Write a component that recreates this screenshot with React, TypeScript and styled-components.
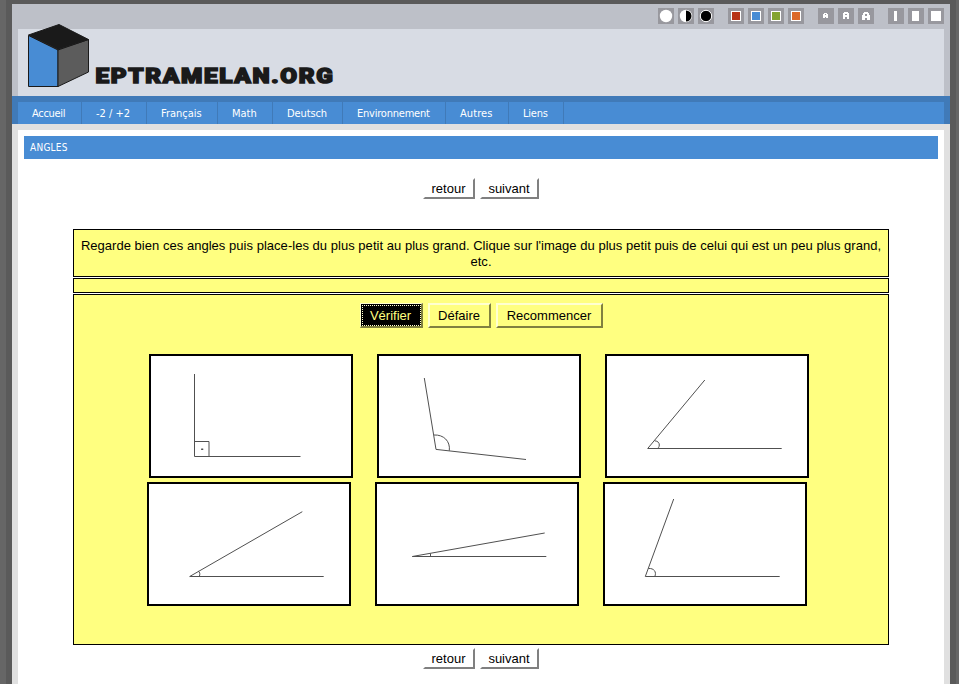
import React from "react";
import styled, { createGlobalStyle } from "styled-components";

const Global = createGlobalStyle`
  * { box-sizing: border-box; }
  html, body { margin: 0; background: #666; overflow: hidden; }
`;

const Frame = styled.div`
  width: 950px;
  height: 684px;
  margin-left: 6px;
  padding: 4px 6px 0;
  background: #5a5a5a;
  overflow: hidden;
`;

const Page = styled.div`
  width: 938px;
  height: 680px;
  background: #e0e0e0;
`;

const Header = styled.header`
  height: 92px;
  padding: 0 6px;
  background: #bdc0c8;
`;

const Toolbar = styled.div`
  display: flex;
  justify-content: flex-end;
  gap: 14px;
  height: 25px;
  padding-top: 4px;
`;

const ToolGroup = styled.div`
  display: flex;
  gap: 4px;
`;

const Tool = styled.svg`
  display: block;
  width: 16px;
  height: 16px;
  background: #98989e;
`;

const Banner = styled.div`
  height: 67px;
  background: #d8dce4;
`;

const Logo = styled.svg`
  display: block;
  width: 320px;
  height: 67px;
  overflow: visible;
`;

const LogoText = styled.text`
  font: 900 20.5px Roboto, sans-serif;
  letter-spacing: 1.4px;
  fill: #1a1a1a;
  stroke: #1a1a1a;
  stroke-width: 1.5px;
`;

const Nav = styled.nav`
  height: 28px;
  padding: 6px 6px 0;
  background: #407ab8;
`;

const NavList = styled.div`
  display: flex;
  height: 22px;
  background: #488cd4;
`;

const NavItem = styled.a<{ $width: number; $spacing: number }>`
  width: ${(p) => p.$width}px;
  height: 22px;
  padding-left: 14px;
  border-right: 1px solid #407ab8;
  font: 11px/23px "DejaVu Sans Condensed", "DejaVu Sans", sans-serif;
  font-stretch: condensed;
  letter-spacing: ${(p) => p.$spacing}px;
  white-space: nowrap;
  color: #fff;
`;

const Content = styled.main`
  margin: 6px 6px 0;
  height: 554px;
  padding: 6px 6px 0;
  background: #fff;
  font: 13px/16px "Liberation Sans", Arial, sans-serif;
  color: #000;
`;

const Title = styled.h1`
  margin: 0;
  height: 23px;
  padding-left: 6px;
  background: #488cd4;
  color: #fff;
  font: 10px/23px "DejaVu Sans Condensed", "DejaVu Sans", sans-serif;
  font-stretch: condensed;
  letter-spacing: 0.25px;
`;

const Links = styled.div<{ $top: number }>`
  display: flex;
  justify-content: center;
  gap: 5px;
  margin-top: ${(p) => p.$top}px;
`;

const LinkButton = styled.button<{ $width: number }>`
  width: ${(p) => p.$width}px;
  height: 21px;
  padding: 0 1px 0 0;
  border: 2px solid;
  border-color: #fff #808080 #808080 #fff;
  background: #fff;
  color: #000;
  font: 13px/17px "Liberation Sans", Arial, sans-serif;
`;

const Exercise = styled.section`
  display: flex;
  flex-direction: column;
  gap: 1px;
  width: 816px;
  margin: 30px 0 0 49px;
`;

const Panel = styled.div<{ $height: number }>`
  height: ${(p) => p.$height}px;
  border: 1px solid #000;
  background: #ffff80;
`;

const Instruction = styled.p`
  margin: 8px 5px 0;
  text-align: center;
  letter-spacing: 0.03px;
`;

const Actions = styled.div`
  display: flex;
  gap: 5px;
  margin: 8px 0 0 286px;
`;

const Action = styled.button<{ $width: number; $focused?: boolean }>`
  width: ${(p) => p.$width}px;
  height: 25px;
  padding: 0 1px 0 0;
  border-style: solid;
  border-width: ${(p) => (p.$focused ? "1px 2px 2px 1px" : "2px")};
  border-color: #ffffd0 #808040 #808040 #ffffd0;
  background: ${(p) => (p.$focused ? "#000" : "#ffff80")};
  color: ${(p) => (p.$focused ? "#ffff80" : "#000")};
  outline: ${(p) => (p.$focused ? "1px dotted #ffffd0" : "none")};
  outline-offset: -3px;
  font: 13px/21px "Liberation Sans", Arial, sans-serif;
`;

const CardRow = styled.div<{ $left: number; $top: number }>`
  display: flex;
  gap: 24px;
  margin: ${(p) => p.$top}px 0 0 ${(p) => p.$left}px;
`;

const Card = styled.div`
  width: 204px;
  height: 124px;
  border: 2px solid #000;
  background: #fff;
`;

const Drawing = styled.svg`
  display: block;
  width: 200px;
  height: 120px;
  fill: none;
  stroke: #505050;
  stroke-width: 1;
`;

const navItems = [
  { label: "Accueil", width: 64, spacing: -0.3 },
  { label: "-2 / +2", width: 65, spacing: 0 },
  { label: "Français", width: 71, spacing: 0 },
  { label: "Math", width: 55, spacing: 0 },
  { label: "Deutsch", width: 70, spacing: -0.1 },
  { label: "Environnement", width: 103, spacing: -0.22 },
  { label: "Autres", width: 63, spacing: 0.08 },
  { label: "Liens", width: 55, spacing: -0.2 },
];

const swatches = ["#b83418", "#488cd4", "#84a430", "#dc6828"];

const letters = [
  "M6 5h3v1h1v4h-2v-1h-1v1h-2v-4h1zM7 6v1h1v-1z",
  "M6 4h4v1h1v6h-2v-2h-2v2h-2v-6h1zM7 6v1h2v-1z",
  "M6 4h4v1h1v2h1v5h-3v-2h-2v2h-3v-5h1v-2h1zM7 6v2h2v-2z",
];

const bars = [
  { x: 6, width: 3 },
  { x: 4, width: 7 },
  { x: 3, width: 10 },
];

const angleRows = [
  {
    left: 75,
    top: 26,
    angles: [
      "M43.5 18V100.5H149.5M43.5 85.5H58V100.5M50.2 93h2M50.2 93.5h2",
      "M45.3 22L57 93.4L147 103.5M55 79C64.5 78.5 71.5 85 70.3 94.7",
      "M97.8 24L40.7 92.5H174.7M47.7 84.8C51 85 52.4 87 52.3 89C52.2 91 51.4 92.2 50.3 92.5",
    ],
  },
  {
    left: 73,
    top: 4,
    angles: [
      "M153.3 27.7L40.7 92.5H174.7M49 87C51 88 51.2 90.2 50.3 92.5",
      "M167.7 49L35.3 72.5H169.3M53.5 69.5V72.5",
      "M68.7 15L40.3 92.5H174.7M43.4 84.5C49 84 51.8 88 49.8 92.5",
    ],
  },
];

function Tools() {
  return (
    <Toolbar>
      <ToolGroup>
        <Tool><circle cx="8" cy="8" r="6.2" fill="#fff" /></Tool>
        <Tool>
          <circle cx="8" cy="8" r="6.2" fill="#fff" />
          <path d="M8 2.5a5.5 5.5 0 0 1 0 11z" fill="#000" />
        </Tool>
        <Tool><circle cx="8" cy="8" r="5.7" fill="#000" stroke="#fff" /></Tool>
      </ToolGroup>
      <ToolGroup>
        {swatches.map((c) => (
          <Tool key={c} shapeRendering="crispEdges">
            <path d="M3 3h10v10h-10z" fill="#fff" />
            <path d="M4 4h8v8h-8z" fill={c} />
          </Tool>
        ))}
      </ToolGroup>
      <ToolGroup>
        {letters.map((d) => (
          <Tool key={d} shapeRendering="crispEdges">
            <path d={d} fill="#fff" fillRule="evenodd" />
          </Tool>
        ))}
      </ToolGroup>
      <ToolGroup>
        {bars.map((b) => (
          <Tool key={b.x} shapeRendering="crispEdges">
            <rect x={b.x} y="3" width={b.width} height="10" fill="#fff" />
          </Tool>
        ))}
      </ToolGroup>
    </Toolbar>
  );
}

function NavLinks({ top }: { top: number }) {
  return (
    <Links $top={top}>
      <LinkButton $width={52}>retour</LinkButton>
      <LinkButton $width={59}>suivant</LinkButton>
    </Links>
  );
}

export default function App() {
  return (
    <>
      <Global />
      <Frame>
        <Page>
          <Header>
            <Tools />
            <Banner>
              <Logo viewBox="18 29 320 67">
                <g stroke="#1a1a1a" strokeWidth="1" strokeLinejoin="round">
                  <path d="M28.5 35.5L58 50V86.5H28.5z" fill="#488cd4" />
                  <path d="M58 50L88.5 39.5V72L58 86.5z" fill="#5c5c5c" />
                  <path d="M28.5 35L59 24.5L88.5 39.5L58 49.5z" fill="#1a1a1a" />
                </g>
                <LogoText x="95.5" y="83.3" textLength="239" lengthAdjust="spacingAndGlyphs">
                  EPTRAMELAN.ORG
                </LogoText>
              </Logo>
            </Banner>
          </Header>
          <Nav>
            <NavList>
              {navItems.map((n) => (
                <NavItem key={n.label} $width={n.width} $spacing={n.spacing}>
                  {n.label}
                </NavItem>
              ))}
            </NavList>
          </Nav>
          <Content>
            <Title>ANGLES</Title>
            <NavLinks top={19} />
            <Exercise>
              <Panel $height={48}>
                <Instruction>
                  Regarde bien ces angles puis place-les du plus petit au plus grand. Clique sur
                  l'image du plus petit puis de celui qui est un peu plus grand, etc.
                </Instruction>
              </Panel>
              <Panel $height={15} />
              <Panel $height={351}>
                <Actions>
                  <Action $width={63} $focused>Vérifier</Action>
                  <Action $width={63}>Défaire</Action>
                  <Action $width={107}>Recommencer</Action>
                </Actions>
                {angleRows.map((row) => (
                  <CardRow key={row.left} $left={row.left} $top={row.top}>
                    {row.angles.map((d) => (
                      <Card key={d}>
                        <Drawing><path d={d} /></Drawing>
                      </Card>
                    ))}
                  </CardRow>
                ))}
              </Panel>
            </Exercise>
            <NavLinks top={3} />
          </Content>
        </Page>
      </Frame>
    </>
  );
}
